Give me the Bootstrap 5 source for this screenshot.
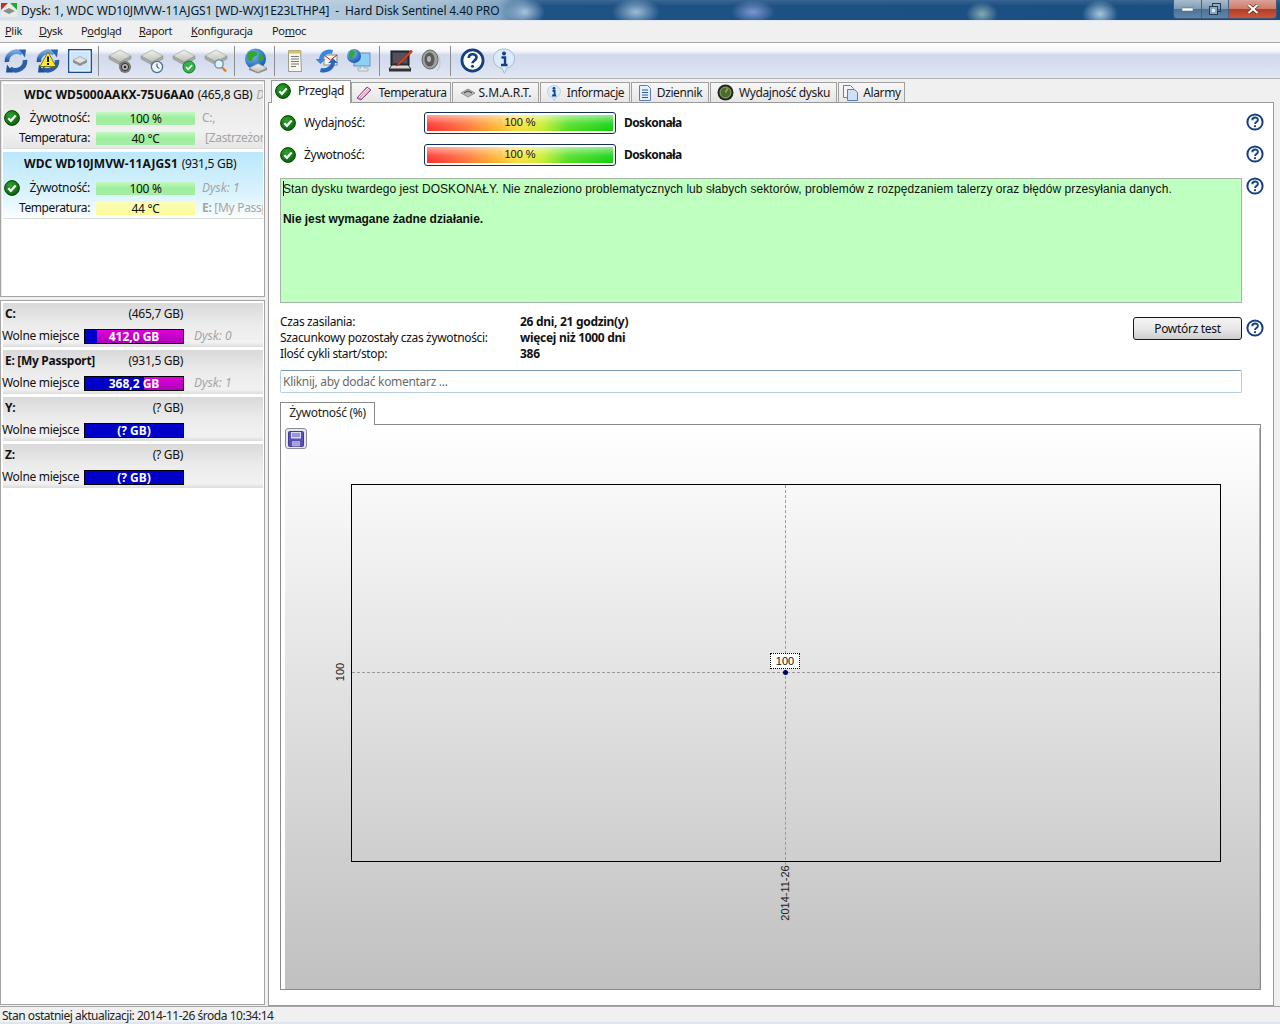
<!DOCTYPE html>
<html lang="pl">
<head>
<meta charset="utf-8">
<title>Hard Disk Sentinel 4.40 PRO</title>
<link href="https://cdn.jsdelivr.net/npm/bootstrap@5.3.0/dist/css/bootstrap.min.css" rel="stylesheet">
<style>
html,body{height:1024px;overflow:hidden}
body{width:1280px;background:#f0f0f0;color:#111;font:12px/16px "Noto Sans",sans-serif;letter-spacing:-.3px}
.arial{font-family:"Liberation Sans",sans-serif;letter-spacing:0}
.titlebar{height:21px;flex:none;padding-left:21px;line-height:22px;border-bottom:1px solid #dfe8ef;position:relative;color:#0b1a28;white-space:nowrap;letter-spacing:-.12px;
 background:
 linear-gradient(180deg,rgba(255,255,255,.12),rgba(255,255,255,0) 30%),
 radial-gradient(ellipse 20px 14px at 525px 12px,rgba(190,215,235,.85),transparent),
 radial-gradient(ellipse 24px 14px at 636px 12px,rgba(190,215,235,.8),transparent),
 radial-gradient(ellipse 22px 12px at 753px 12px,rgba(150,170,225,.8),transparent),
 radial-gradient(ellipse 16px 12px at 982px 14px,rgba(170,200,195,.75),transparent),
 radial-gradient(ellipse 18px 14px at 1100px 14px,rgba(190,220,235,.85),transparent),
 linear-gradient(90deg,#d5e2ec 0,#bcd0e0 270px,#a0bcd2 440px,#7ea2c0 500px,#1f5285 530px,#1a4d80 1280px)}
.app-logo{position:absolute;left:1px;top:3px}
.win-btns{position:absolute;right:3px;top:0;height:19px;border:1px solid #3c5a78;border-top:0;border-radius:0 0 4px 4px;overflow:hidden}
.win-btn{height:18px;display:flex;align-items:center;justify-content:center;border-right:1px solid #45617e}
.win-min{width:28px;background:linear-gradient(180deg,#a9bccd,#7d99b4 50%,#4e7296 52%,#5e86ab)}
.win-max{width:27px;background:linear-gradient(180deg,#a9bccd,#7d99b4 50%,#4e7296 52%,#5e86ab)}
.win-close{width:47px;border-right:0;background:linear-gradient(180deg,#dba397,#cc7a68 50%,#b83c26 52%,#c9563e)}
.menubar{height:22px;flex:none;background:#f0f0f0;border-bottom:1px solid #a8a8a8;padding-left:5px;line-height:20px;color:#1a1a1a;font-size:11px}
.menu-i{display:block;color:inherit;text-decoration:none}
.menu-plik{width:34px}.menu-dysk{width:42px}.menu-pod{width:58px}.menu-rap{width:52px}.menu-kon{width:81px}
.toolbar{height:36px;flex:none;border-bottom:1px solid #b4b4b4;background:linear-gradient(180deg,#fff 0,#f4f6fb 8px,#d2daec 12px,#d4dcee 20px,#e2e8f3 35px)}
.tool{width:32px;height:35px;display:flex;align-items:center;justify-content:center;flex:none}
.tool svg{display:block}
.tsep{width:1px;height:30px;background:#8d8d8d;align-self:center;flex:none}
.s-a{margin-left:2px;margin-right:5px}.s-b{margin-left:2px;margin-right:5px}.s-c{margin-left:2px;margin-right:4px}.s-d{margin-left:4px;margin-right:4px}.s-e{margin-left:2px;margin-right:5px}
.workspace{height:927px;flex:none}
.side{width:268px;flex:none;padding-top:1px}
.disks-box{width:265px;height:217px;background:#fff;border:1px solid #a5a5a5;box-shadow:inset 1px 1px 0 #e6e6e6;padding:3px 1px 0 2px;flex:none;overflow:hidden}
.vols-box{width:265px;height:705px;margin-top:3px;background:#fff;border:1px solid #a5a5a5;padding:2px 1px 0 2px;flex:none;overflow:hidden}
.disk-card{height:65px;margin-bottom:3px;background:linear-gradient(180deg,#e4e4e4,#f1f1f1 75%,#e6e6e6);position:relative;white-space:nowrap;overflow:hidden;border-bottom:1px solid #ddd}
.disk-sel{height:67px;background:linear-gradient(180deg,#bce8fb,#d8f2fd 60%,#fbfeff);border-bottom:1px solid #dcdcdc}
.disk-head{height:20px;padding-left:21px;line-height:21px;letter-spacing:-.3px}
.disk-head b{letter-spacing:.06px}
.disk-head .muted-i{margin-left:1px}
.disk-head .size-a{margin-left:1px}
.disk-sel .disk-head{line-height:23px;height:25px}
.disk-row{height:20px;display:flex;align-items:center}
.disk-row1{margin-top:4px}
.disk-sel .disk-row1{margin-top:1px}
.disk-ic{width:21px;flex:none;padding-left:1px;display:flex}
.disk-lab{width:66px;text-align:right;flex:none}
.disk-lab2{width:87px;text-align:right;flex:none;letter-spacing:-.4px}
.disk-bar{width:99px;height:13px;margin-left:6px;margin-right:7px;text-align:center;line-height:13px;flex:none;color:#111}
.bar-g{background:linear-gradient(180deg,#c4f7c4,#9cee9c 50%,#a6eea6)}
.bar-y{background:linear-gradient(180deg,#fdfdb8,#fbfb98)}
.muted-i{color:#a5a5a5;font-style:italic;letter-spacing:0}
.muted-n{color:#a5a5a5}
.note-off{padding-left:3px}
.vol-card{height:44px;margin-bottom:3px;background:linear-gradient(180deg,#d9d9d9,#ececec 50%,#f1f1f1 90%,#dcdcdc);position:relative;white-space:nowrap;margin-left:0}
.vol-top{height:24px;display:flex;padding-left:2px;line-height:22px;width:180px;justify-content:space-between}
.vol-row{height:20px;display:flex;align-items:center;margin-left:-1px;margin-top:-1px}
.vol-lab{width:82px;flex:none}
.vol-bar{width:100px;height:15px;border:1px solid #000;background:#0000c8;color:#fff;font-weight:700;text-align:center;line-height:14px;position:relative;flex:none;overflow:hidden;letter-spacing:0}
.vol-fill{position:absolute;top:0;right:0;bottom:0;background:linear-gradient(180deg,#e000d8,#c000c8 60%,#b000b8)}
.fill-88{width:88%}.fill-40{width:40%}
.vol-txt{position:relative}
.vol-disk{margin-left:10px}
.pane{width:1006px;flex:none;padding-top:0}
.nav-tabs.hd-tabs{height:23px;border:0;flex-wrap:nowrap;padding-left:3px;align-items:flex-end}
.nav-tabs .nav-link.hd-tab{height:20px;margin:0 1px 0 0;background:linear-gradient(180deg,#f7f7f7,#e6e6e6);border:1px solid #a0a0a0;border-bottom:0;border-radius:0;color:#1a1a1a;display:flex;align-items:center;justify-content:center;gap:5px;white-space:nowrap;padding:0;letter-spacing:-.4px}
.nav-tabs .nav-link.hd-tab.on{height:23px;background:#fff;margin:0 0 -1px 0;position:relative;z-index:2;padding:0 3px 3px 0;border-color:#9a9a9a;gap:7px}
.nav-tabs .nav-link.hd-tab.tab-smart{letter-spacing:-.1px;gap:3px}
.tw-a{width:80px}.tw-b{width:100px}.tw-c{width:87px}.tw-d{width:90px}.tw-e{width:78px}.tw-f{width:127px}.tw-g{width:67px}
.pane-body{height:904px;background:#fff;border:1px solid #9a9a9a;position:relative;padding:0 12px 0 11px;flex:none}
.health-row{height:32px;display:flex;align-items:center;position:relative}
.health-first{margin-top:4px}
.health-ic{width:24px;flex:none;display:flex}
.health-lab{width:120px;flex:none}
.health-bar{width:192px;height:22px;border:1px solid #14305a;border-radius:3px;padding:2px;background:#fff;flex:none}
.health-fill{height:16px;text-align:center;line-height:15px;font-size:11px;color:#111;background:linear-gradient(180deg,rgba(255,255,255,.55),rgba(255,255,255,.1) 55%,rgba(0,0,0,.02)),linear-gradient(90deg,#ff3030 0,#ff7038 20%,#ffb030 36%,#ffe040 48%,#c8f030 62%,#50e020 76%,#10d010 100%)}
.health-val{margin-left:8px;font-weight:700;letter-spacing:-.6px}
.help-at{position:absolute;left:966px;top:50%;margin-top:-10px;display:flex}
.status-box{width:962px;height:125px;margin-top:7px;background:#bfffbf;border:1px solid #a8b4a8;padding:2px 2px;line-height:16px;position:relative;font-size:12px;color:#111}
.status-box p{margin:0 0 14px 0;letter-spacing:.06px}
.status-box p b{letter-spacing:-.06px}
.status-box .status-help{left:965px;top:-2px;margin-top:0}
.caret{position:absolute;left:2px;top:2px;width:1px;height:15px;background:#000}
.facts{height:67px;position:relative;width:962px;padding-top:11px}
.fact{height:16px;display:flex}
.fact-l{width:240px;flex:none;letter-spacing:-.35px}
.fact-v{font-weight:700}
.retest{position:absolute;right:0;top:14px;width:109px;height:23px;padding:0;font:inherit;letter-spacing:inherit;color:#111;border:1px solid #101050;border-radius:3px;background:linear-gradient(180deg,#f4f4f4,#e8e8e8 50%,#cdcdcd);line-height:20px}
.retest-h{position:absolute;left:966px;top:16px;display:flex}
.comment{width:962px;height:23px;padding:0 2px;border:1px solid #b5cfe0;border-top-color:#7a9cb4;border-radius:2px;font:inherit;letter-spacing:inherit;color:#555;background:#fff;box-shadow:none}
.comment::placeholder{color:#6b6b6b;opacity:1}
.graph-tabs{height:23px;margin-top:9px;border:0;position:relative;z-index:2}
.graph-tab{width:95px;height:23px;background:#fff;border:1px solid #8a8a8a;border-bottom:0;text-align:center;line-height:19px;color:#222;display:block;padding:0}
.graph-box{width:981px;height:566px;margin-top:-1px;border:1px solid #8a8a8a;background:#fff;padding:3px 0 0 4px;position:relative}
.graph-in{width:975px;height:561px;border-right:1px solid #b5b5b5;position:relative;background:linear-gradient(180deg,#fff 0,#fafafa 8%,#c0c0c0 100%)}
.graph-save{position:absolute;left:0;top:0;width:22px;height:21px;border:1px solid #8c8c98;border-radius:3px;background:#e6e6ee;display:flex;align-items:center;justify-content:center}
.plot{position:absolute;left:66px;top:56px;width:870px;height:378px;border:1px solid #000;font:11px/13px "Liberation Sans",sans-serif;letter-spacing:0;color:#111}
.v-line{position:absolute;left:433px;top:0;bottom:-4px;border-left:1px dashed #999}
.h-line{position:absolute;left:0;right:0;top:187px;border-top:1px dashed #999}
.pt{position:absolute;left:431px;top:185px;width:5px;height:5px;border-radius:50%;background:#000060}
.pt-lab{position:absolute;left:418px;top:168px;width:30px;height:16px;border:1px dotted #000;background:#fff;text-align:center;line-height:15px}
.y-lab{position:absolute;left:-12px;top:187px;transform:translate(-50%,-50%) rotate(-90deg);white-space:nowrap;color:#222}
.x-lab{position:absolute;left:433px;top:408px;transform:translate(-50%,-50%) rotate(-90deg);white-space:nowrap;color:#222}
.statusbar{height:18px;flex:none;border-top:1px solid #a5a5a5;border-bottom:2px solid #dfe6ee;background:#f0f0f0;padding-left:2px;line-height:18px;color:#222;white-space:nowrap;letter-spacing:-.47px}
</style>
</head>
<body class="d-flex flex-column">
<svg width="0" height="0" class="position-absolute">
<defs>
<radialGradient id="gOk" cx=".4" cy=".35" r=".7"><stop offset="0" stop-color="#2fa32f"/><stop offset="1" stop-color="#075f07"/></radialGradient>
<linearGradient id="gDisk" x1="0" y1="0" x2="0" y2="1"><stop offset="0" stop-color="#f2f3ee"/><stop offset="1" stop-color="#bcbfb8"/></linearGradient>
<linearGradient id="gBlue" x1="0" y1="0" x2="0" y2="1"><stop offset="0" stop-color="#6fa6e0"/><stop offset="1" stop-color="#1b4f9c"/></linearGradient>
<radialGradient id="gGlobe" cx=".35" cy=".3" r=".8"><stop offset="0" stop-color="#7cc0f5"/><stop offset="1" stop-color="#0f4ea8"/></radialGradient>
<symbol id="i-ok" viewBox="0 0 16 16"><circle cx="8" cy="8" r="7.4" fill="url(#gOk)" stroke="#044504" stroke-width="1"/><path d="M4.3 8.2l2.6 2.6 4.8-5.4" fill="none" stroke="#fff" stroke-width="2.2"/></symbol>
<symbol id="i-help" viewBox="0 0 18 18"><circle cx="9" cy="9" r="7.6" fill="#fff" stroke="#15407f" stroke-width="2"/><path d="M6.3 7.2c0-3.6 5.6-3.6 5.6-.3 0 2-2.9 2.2-2.9 4.1" fill="none" stroke="#15407f" stroke-width="1.9"/><circle cx="9" cy="13.2" r="1.1" fill="#15407f"/></symbol>
<symbol id="i-refresh" viewBox="0 0 26 26"><path d="M4 14A9.5 9.5 0 0 1 19 5.5" fill="none" stroke="url(#gBlue)" stroke-width="4.6"/><path d="M22 12A9.5 9.5 0 0 1 7 20.5" fill="none" stroke="#2c5f9f" stroke-width="4.6"/><path d="M16 1.5l7 0-1 8z" fill="#2a64b0"/><path d="M10 24.5l-7 0 1-8z" fill="#1d4f96"/></symbol>
<symbol id="i-disk" viewBox="0 0 26 26"><path d="M2 10l11-6 11 6-11 6z" fill="url(#gDisk)" stroke="#a0a39c" stroke-width=".7"/><path d="M2 10v3l11 6 11-6v-3l-11 6z" fill="#a8aba3" stroke="#8e918a" stroke-width=".5"/><path d="M13 16v3" stroke="#5a9a40" stroke-width="1"/></symbol>
</defs>
</svg>

<header class="titlebar">
<svg class="app-logo" width="16" height="14" viewBox="0 0 16 14"><rect width="16" height="14" fill="#e8ece8"/><path d="M0 0h7L0 7z" fill="#d22"/><path d="M16 0v7L9 0z" fill="#2a2"/><path d="M2 8l6-3 6 3-6 3z" fill="#8a8f8a"/></svg>
Dysk: 1, WDC WD10JMVW-11AJGS1 [WD-WXJ1E23LTHP4]&nbsp; -&nbsp; Hard Disk Sentinel 4.40 PRO
<div class="win-btns d-flex">
<div class="win-btn win-min"><svg width="11" height="5"><rect y="1" width="11" height="3" fill="#fff" stroke="#46607c" stroke-width=".5"/></svg></div>
<div class="win-btn win-max"><svg width="12" height="12"><rect x="3.5" y=".5" width="8" height="8" fill="none" stroke="#243d57"/><rect x=".5" y="3.5" width="8" height="8" fill="#8ba6bf" stroke="#243d57"/><rect x="3" y="6" width="3" height="3" fill="#dfe8ef"/></svg></div>
<div class="win-btn win-close"><svg width="12" height="10"><path d="M1.5 1l9 8M10.5 1l-9 8" stroke="#5a2218" stroke-width="3.4"/><path d="M1.5 1l9 8M10.5 1l-9 8" stroke="#fff" stroke-width="2.2"/></svg></div>
</div>
</header>

<nav class="menubar d-flex">
<a class="menu-i menu-plik" href="#"><u>P</u>lik</a>
<a class="menu-i menu-dysk" href="#"><u>D</u>ysk</a>
<a class="menu-i menu-pod" href="#">P<u>o</u>dgląd</a>
<a class="menu-i menu-rap" href="#"><u>R</u>aport</a>
<a class="menu-i menu-kon" href="#"><u>K</u>onfiguracja</a>
<a class="menu-i" href="#">Po<u>m</u>oc</a>
</nav>

<div class="toolbar d-flex align-items-center">
<div class="tool"><svg width="26" height="26"><use href="#i-refresh"/></svg></div>
<div class="tool"><svg width="26" height="26"><use href="#i-refresh"/><path d="M13 4l8 14.5H5z" fill="#fde92b" stroke="#6a5a00" stroke-width=".8"/><rect x="12" y="8.5" width="2" height="5.5" fill="#111"/><rect x="12" y="15" width="2" height="2" fill="#111"/></svg></div>
<div class="tool"><svg width="24" height="24"><rect x=".8" y=".8" width="22.4" height="22.4" fill="#cfe6f8" stroke="#1d4f96" stroke-width="1.6"/><rect x="2" y="2" width="20" height="20" fill="none" stroke="#f3fafe"/><path d="M5 11l7-3.5L19 11l-7 3.5z" fill="#e2e3df" stroke="#8d8f89" stroke-width=".6"/><path d="M5 11v2.5l7 3.5 7-3.500V11l-7 3.5z" fill="#8d8f89"/></svg></div>
<div class="tsep s-a"></div>
<div class="tool"><svg width="26" height="26"><use href="#i-disk" y="-2"/><circle cx="18" cy="19" r="6" fill="#777"/><circle cx="18" cy="19" r="3.6" fill="#b5b5b5" stroke="#333"/><circle cx="18" cy="19" r="1.3" fill="#222"/></svg></div>
<div class="tool"><svg width="26" height="26"><use href="#i-disk" y="-2"/><circle cx="18" cy="19" r="5.6" fill="#eef4fb" stroke="#4c6f94" stroke-width="1.3"/><path d="M18 15.5V19l2.4 1.5" stroke="#244" fill="none"/></svg></div>
<div class="tool"><svg width="26" height="26"><use href="#i-disk" y="-2"/><circle cx="18" cy="19" r="6" fill="#2fb34a" stroke="#157a2b"/><path d="M15 19l2.2 2.3 3.900-4.200" fill="none" stroke="#fff" stroke-width="1.8"/></svg></div>
<div class="tool"><svg width="26" height="26"><use href="#i-disk" y="-2"/><circle cx="16" cy="16" r="4.2" fill="#dff0fb" stroke="#6b8db0" stroke-width="1.3"/><path d="M19 19.3l4.2 4.2" stroke="#d08a2a" stroke-width="2.4"/></svg></div>
<div class="tsep s-b"></div>
<div class="tool"><svg width="26" height="26"><circle cx="12.5" cy="11" r="10.5" fill="url(#gGlobe)"/><path d="M6 4c3-2 7-1 8 1s-1 3-3 4-1 4-3 4-4-2-4-4 0-4 2-5zM17 6c2 0 4 3 3.6 6l-3 1c-2 0-2-2-2-4z" fill="#35a62d"/><path d="M6 20l9-4.500 9 4.500-9 4.500z" fill="url(#gDisk)" stroke="#8d8f89" stroke-width=".7"/><path d="M6 20v2l9 3.500 9-3.500v-2l-9 4.500z" fill="#8d8f89"/></svg></div>
<div class="tsep s-c"></div>
<div class="tool"><svg width="20" height="24"><path d="M3.500 1.500h12l1 21H3.500z" fill="#f8f7ee" stroke="#9d9d90"/><rect x="3.500" y="1.500" width="13" height="3" fill="#d4c069"/><path d="M6 7.500h8M6 10h8M6 12.500h8M6 15h8M6 17.500h5" stroke="#777" stroke-width="1"/></svg></div>
<div class="tool"><svg width="26" height="26"><rect x="10" y="7" width="13" height="10" fill="#f4f4e8" stroke="#8a8a80"/><path d="M10 7l6.500 5 6.500-5" fill="none" stroke="#b02020"/><path d="M19 2C12 0 6 4 5 11h-3.500l5 5 5-5H9c1-4 5-6 9-5z" fill="#3a86dc"/><path d="M6 24c7 2 14-2 15-9h3l-5-4.500L14 15h3c-1 4-6 6-10 5z" fill="#2468c4"/></svg></div>
<div class="tool"><svg width="26" height="26"><rect x="8" y="5" width="16" height="13" fill="#8fd0fb" stroke="#6f8fb0"/><circle cx="8" cy="8" r="7" fill="url(#gGlobe)"/><path d="M4 3c3-2 5 0 5 2s-2 3-3 5-3 0-3-2 0-4 1-5z" fill="#35a62d"/><path d="M15 18h3v2h4v3h-10v-3h3z" fill="#dfe4ea" stroke="#8795a6" stroke-width=".6"/></svg></div>
<div class="tsep s-d"></div>
<div class="tool"><svg width="26" height="26"><rect x="4" y="3" width="18" height="14" fill="#3a3a42" stroke="#111"/><rect x="6" y="5" width="14" height="10" fill="#56505e"/><path d="M2 21l3-4h16l3 4z" fill="#d8d8d8" stroke="#333"/><rect x="2" y="21" width="22" height="2.500" fill="#333"/><path d="M24 2L11 15l-1.500 3 3-1.500L25.500 4z" fill="#d3431e" stroke="#7a2410" stroke-width=".5"/></svg></div>
<div class="tool"><svg width="26" height="26"><path d="M15 4A9 11 0 0 1 15 20" fill="none" stroke="#b5c0cc" stroke-width="1.400"/><path d="M18 6A10 12 0 0 1 18 23" fill="none" stroke="#c5ced8" stroke-width="1.400"/><ellipse cx="11" cy="11.500" rx="8" ry="9.500" fill="#a0a0a0" stroke="#666"/><ellipse cx="10.500" cy="11.500" rx="5" ry="7" fill="#5a5a5a"/><ellipse cx="10" cy="11" rx="2" ry="3" fill="#b5b5b5"/></svg></div>
<div class="tsep s-e"></div>
<div class="tool"><svg width="25" height="25"><use href="#i-help"/></svg></div>
<div class="tool"><svg width="26" height="28" viewBox="0 0 26 28"><path d="M13 2C6.500 2 2.500 6.500 2.500 11.500S6 20.500 10.500 21l3 5.500 2.500-5.500c4.500-1 7.500-5 7.500-9.500S19.500 2 13 2z" fill="#dcebfa" stroke="#9dbcdc"/><circle cx="13" cy="6.500" r="2" fill="#14408a"/><path d="M10.500 10.500h3.500v7M10 18h6.500" fill="none" stroke="#14408a" stroke-width="2.400"/></svg></div>
</div>

<main class="workspace d-flex">
<aside class="side d-flex flex-column">
<div class="disks-box">
 <div class="disk-card">
  <div class="disk-head"><b>WDC WD5000AAKX-75U6AA0</b> <span class="size-a">(465,8 GB)</span> <span class="muted-i">Dysk: 0</span></div>
  <div class="disk-row disk-row1"><span class="disk-ic"><svg width="16" height="16"><use href="#i-ok"/></svg></span><span class="disk-lab">Żywotność:</span><span class="disk-bar bar-g">100 %</span><span class="muted-n">C:,</span></div>
  <div class="disk-row"><span class="disk-lab2">Temperatura:</span><span class="disk-bar bar-g">40 °C</span><span class="muted-n note-off">[Zastrzeżone]</span></div>
 </div>
 <div class="disk-card disk-sel">
  <div class="disk-head"><b>WDC WD10JMVW-11AJGS1</b> <span class="size-a">(931,5 GB)</span></div>
  <div class="disk-row disk-row1"><span class="disk-ic"><svg width="16" height="16"><use href="#i-ok"/></svg></span><span class="disk-lab">Żywotność:</span><span class="disk-bar bar-g">100 %</span><span class="muted-i">Dysk: 1</span></div>
  <div class="disk-row"><span class="disk-lab2">Temperatura:</span><span class="disk-bar bar-y">44 °C</span><span class="muted-n"><b>E:</b> [My Passport]</span></div>
 </div>
</div>
<div class="vols-box">
 <div class="vol-card"><div class="vol-top"><b>C:</b><span>(465,7 GB)</span></div><div class="vol-row"><span class="vol-lab">Wolne miejsce</span><span class="vol-bar"><span class="vol-fill fill-88"></span><span class="vol-txt">412,0 GB</span></span><span class="vol-disk muted-i">Dysk: 0</span></div></div>
 <div class="vol-card"><div class="vol-top"><b>E: [My Passport]</b><span>(931,5 GB)</span></div><div class="vol-row"><span class="vol-lab">Wolne miejsce</span><span class="vol-bar"><span class="vol-fill fill-40"></span><span class="vol-txt">368,2 GB</span></span><span class="vol-disk muted-i">Dysk: 1</span></div></div>
 <div class="vol-card"><div class="vol-top"><b>Y:</b><span>(? GB)</span></div><div class="vol-row"><span class="vol-lab">Wolne miejsce</span><span class="vol-bar"><span class="vol-txt">(? GB)</span></span></div></div>
 <div class="vol-card"><div class="vol-top"><b>Z:</b><span>(? GB)</span></div><div class="vol-row"><span class="vol-lab">Wolne miejsce</span><span class="vol-bar"><span class="vol-txt">(? GB)</span></span></div></div>
</div>
</aside>

<section class="pane d-flex flex-column">
<ul class="nav nav-tabs hd-tabs">
 <li class="nav-item"><a class="nav-link hd-tab on tw-a" href="#"><svg width="16" height="16"><use href="#i-ok"/></svg>Przegląd</a></li>
 <li class="nav-item"><a class="nav-link hd-tab tw-b" href="#"><svg width="18" height="16" viewBox="0 0 18 16"><path d="M2 13L12 2l4 3L6 15z" fill="#d9a0c8" stroke="#8a4a7a"/><path d="M4 12L13 3M6 13l8-9" stroke="#fff" stroke-width=".8"/></svg>Temperatura</a></li>
 <li class="nav-item"><a class="nav-link hd-tab tab-smart tw-c" href="#"><svg width="16" height="10" viewBox="0 0 16 10"><path d="M1 5l7-4 7 4-7 4z" fill="#b8b8b8" stroke="#666" stroke-width=".6"/><path d="M4 5l4-2 4 2" stroke="#333" fill="none"/></svg>S.M.A.R.T.</a></li>
 <li class="nav-item"><a class="nav-link hd-tab tw-d" href="#"><svg width="16" height="18" viewBox="0 0 26 28"><path d="M13 2C6.500 2 2.500 6.500 2.500 11.500S6 20.500 10.500 21l3 5.500 2.500-5.500c4.500-1 7.500-5 7.500-9.500S19.500 2 13 2z" fill="#dcebfa" stroke="#9dbcdc"/><circle cx="13" cy="6.500" r="2.400" fill="#14408a"/><path d="M10.500 10.500h3.500v7M10 18h6.500" fill="none" stroke="#14408a" stroke-width="3"/></svg>Informacje</a></li>
 <li class="nav-item"><a class="nav-link hd-tab tw-e" href="#"><svg width="14" height="16" viewBox="0 0 14 16"><path d="M1.500.5h8l3 3v12h-11z" fill="#e8f0fb" stroke="#5a7fb5"/><path d="M4 5h6M4 7.500h6M4 10h6M4 12.500h6" stroke="#2a5da8"/></svg>Dziennik</a></li>
 <li class="nav-item"><a class="nav-link hd-tab tw-f" href="#"><svg width="17" height="17" viewBox="0 0 17 17"><circle cx="8.500" cy="8.500" r="8" fill="#222"/><circle cx="8.500" cy="8.500" r="5.500" fill="#4a6a3a" stroke="#8abf5a"/><path d="M8.500 8.500l2-4" stroke="#e0a020" stroke-width="1.500"/></svg>Wydajność dysku</a></li>
 <li class="nav-item"><a class="nav-link hd-tab tw-g" href="#"><svg width="16" height="16" viewBox="0 0 16 16"><path d="M1.500.5h7l3 3v9h-10z" fill="#f2f6fb" stroke="#6a7f9a"/><path d="M5.500 4.500h7l3 3v8h-10z" fill="#cfe0f5" stroke="#5a7fb5"/></svg>Alarmy</a></li>
</ul>
<div class="pane-body">
 <div class="health-row health-first"><span class="health-ic"><svg width="16" height="16"><use href="#i-ok"/></svg></span><span class="health-lab">Wydajność:</span><div class="health-bar"><div class="health-fill arial">100 %</div></div><span class="health-val">Doskonała</span><span class="help-at"><svg width="18" height="18"><use href="#i-help"/></svg></span></div>
 <div class="health-row"><span class="health-ic"><svg width="16" height="16"><use href="#i-ok"/></svg></span><span class="health-lab">Żywotność:</span><div class="health-bar"><div class="health-fill arial">100 %</div></div><span class="health-val">Doskonała</span><span class="help-at"><svg width="18" height="18"><use href="#i-help"/></svg></span></div>
 <div class="status-box arial"><span class="caret"></span><p>Stan dysku twardego jest DOSKONAŁY. Nie znaleziono problematycznych lub słabych sektorów, problemów z rozpędzaniem talerzy oraz błędów przesyłania danych.</p><p><b>Nie jest wymagane żadne działanie.</b></p><span class="help-at status-help"><svg width="18" height="18"><use href="#i-help"/></svg></span></div>
 <div class="facts">
  <div class="fact"><span class="fact-l">Czas zasilania:</span><span class="fact-v">26 dni, 21 godzin(y)</span></div>
  <div class="fact"><span class="fact-l">Szacunkowy pozostały czas żywotności:</span><span class="fact-v">więcej niż 1000 dni</span></div>
  <div class="fact"><span class="fact-l">Ilość cykli start/stop:</span><span class="fact-v">386</span></div>
  <button type="button" class="btn retest">Powtórz test</button>
  <span class="retest-h"><svg width="18" height="18"><use href="#i-help"/></svg></span>
 </div>
 <input class="form-control comment" type="text" placeholder="Kliknij, aby dodać komentarz ...">
 <ul class="nav graph-tabs"><li class="nav-item"><a class="nav-link graph-tab" href="#">Żywotność (%)</a></li></ul>
 <div class="graph-box">
  <div class="graph-in">
   <div class="graph-save"><svg width="16" height="16" viewBox="0 0 16 16"><rect x=".5" y=".5" width="15" height="15" rx="1" fill="#5a50b8" stroke="#403a90"/><rect x="3" y="1" width="10" height="6.500" fill="#d8d8f0"/><path d="M4 3h8M4 5h8" stroke="#5a50b8"/><rect x="4" y="10" width="8" height="5.500" fill="#a8a4d8"/></svg></div>
   <div class="plot">
    <div class="v-line"></div><div class="h-line"></div>
    <div class="pt-lab">100</div><div class="pt"></div>
    <div class="y-lab">100</div>
    <div class="x-lab">2014-11-26</div>
   </div>
  </div>
 </div>
</div>
</section>
</main>

<footer class="statusbar">Stan ostatniej aktualizacji: 2014-11-26 środa 10:34:14</footer>
</body>
</html>
